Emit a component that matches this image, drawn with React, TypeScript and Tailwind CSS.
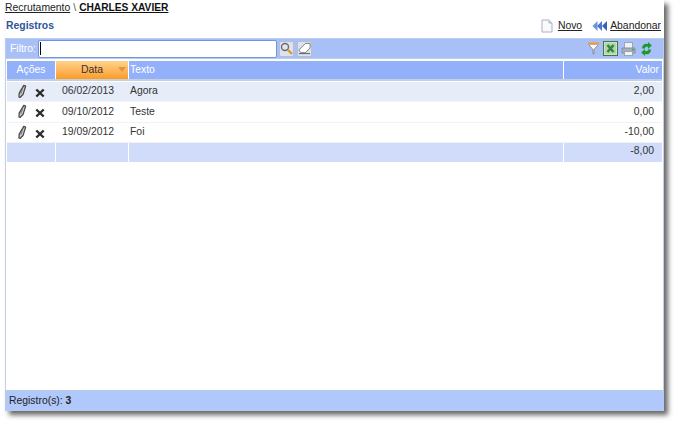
import React from "react";

const rows = [
  { date: "06/02/2013", text: "Agora", value: "2,00", bg: "bg-[#e6ecf8]" },
  { date: "09/10/2012", text: "Teste", value: "0,00", bg: "bg-white" },
  { date: "19/09/2012", text: "Foi", value: "-10,00", bg: "bg-white" },
];

function Pencil() {
  return (
    <svg width="10" height="15" viewBox="0 0 10 15">
      <path d="M6.8 1.4 8.6 2.2 6 10.6 3 13.4 2 13 2.2 9.2Z" fill="#d0d0d0" stroke="#4a4a4a" strokeWidth="1.3" strokeLinejoin="round" />
      <path d="M6 3 3.8 10" stroke="#666" strokeWidth="0.8" />
    </svg>
  );
}

function Cross() {
  return (
    <svg width="10" height="10" viewBox="0 0 10 10">
      <path d="M1.3 1.5 8.7 8.5M8.7 1.5 1.3 8.5" stroke="#2b2b2b" strokeWidth="2.4" />
    </svg>
  );
}

function Actions() {
  return (
    <div className="flex items-center gap-[8px] pl-[10px]">
      <Pencil />
      <span className="mt-[3px] flex">
        <Cross />
      </span>
    </div>
  );
}

function ToolButton({ children }: { children: React.ReactNode }) {
  return (
    <span className="flex h-[16px] w-[15px] items-center justify-center rounded-[2px] border border-[#b4bdd2] bg-[#dfe2ec]">
      {children}
    </span>
  );
}

export default function App() {
  return (
    <div className="h-[422px] w-[677px] overflow-hidden bg-white font-['Liberation_Sans',Arial,sans-serif] text-[10.4px] text-[#333]">
      <div className="ml-[5px] flex h-[411px] w-[659px] flex-col bg-white shadow-[4px_4px_5px_rgba(0,0,0,0.6)]">
        <div className="flex h-[17px] items-center text-[10.4px] leading-none">
          <span className="text-[#222] underline">Recrutamento</span>
          <span className="mx-[3px] text-[#555]">\</span>
          <span className="text-[10.2px] font-bold text-[#111] underline">CHARLES XAVIER</span>
        </div>

        <div className="flex h-[21px] items-center justify-between pb-[3px] pl-[1px] pr-[3px]">
          <span className="text-[10.4px] font-bold text-[#2f5597]">Registros</span>
          <div className="flex items-center text-[#222]">
            <svg width="12" height="14" viewBox="0 0 12 14">
              <path d="M1 1H8L11 4V13H1Z" fill="#fafafa" stroke="#aab2c2" />
              <path d="M8 1V4H11" fill="#dfe3ea" stroke="#aab2c2" />
            </svg>
            <span className="ml-[5px] underline">Novo</span>
            <svg className="ml-[10px]" width="16" height="12" viewBox="0 0 16 12">
              <path d="M5.5 1V11L0.5 6Z" fill="#6f93d6" />
              <path d="M10 1V11L5 6Z" fill="#4f78c8" />
              <path d="M15 1V11L10 6Z" fill="#3763b5" />
            </svg>
            <span className="ml-[2px] underline">Abandonar</span>
          </div>
        </div>

        <div className="flex h-[21px] items-center border border-[#b9cdf0] bg-[#a9c0f7] pl-[4px] pr-[11px]">
          <span className="w-[28px] text-white">Filtro:</span>
          <div className="flex h-[18px] w-[239px] items-center rounded-[2px] border border-[#6f95dc] bg-white pl-[1px]">
            <span className="h-[13px] w-[1px] bg-black" />
          </div>
          <div className="ml-[2px] flex gap-[3px]">
            <ToolButton>
              <svg width="13" height="13" viewBox="0 0 13 13">
                <circle cx="5" cy="5" r="3.5" fill="#dfe6f0" stroke="#6d6d6d" strokeWidth="1.4" />
                <path d="M8 8 12 12" stroke="#d99a2b" strokeWidth="2.4" />
              </svg>
            </ToolButton>
            <ToolButton>
              <svg width="14" height="13" viewBox="0 0 14 13">
                <path d="M1 8 8 1H13V6L8 11H3Z" fill="#fff" stroke="#777" />
                <path d="M1 12H13" stroke="#555" />
              </svg>
            </ToolButton>
          </div>
          <div className="ml-auto flex items-center gap-[3px]">
            <svg width="13" height="13" viewBox="0 0 13 13">
              <path d="M1 1.5H12" stroke="#f09a2c" strokeWidth="2" />
              <path d="M2 3 6 7.5V12L7 12V7.5L11 3" fill="#fff" stroke="#8a8a8a" />
            </svg>
            <svg width="15" height="15" viewBox="0 0 15 15">
              <rect x="0.5" y="0.5" width="14" height="14" fill="#cfe0cb" stroke="#3f7a45" />
              <rect x="2" y="2" width="11" height="11" fill="#b5d3ae" />
              <path d="M4.5 4 10.5 11M10.5 4 4.5 11" stroke="#2c8a3c" strokeWidth="2.6" />
            </svg>
            <svg width="15" height="14" viewBox="0 0 15 14">
              <rect x="3.5" y="0.5" width="8" height="6" fill="#f0f2f5" stroke="#9aa5b5" />
              <path d="M1 6H14V11H1Z" fill="#a5afbd" stroke="#84909f" />
              <rect x="3.5" y="9.5" width="8" height="4" fill="#f2f2f2" stroke="#9aa5b5" />
              <rect x="11" y="7" width="2" height="1.5" fill="#2fb344" />
            </svg>
            <svg className="ml-[2px]" width="11" height="14" viewBox="0 0 11 14">
              <path d="M1 6.5C1 2.5 4 1 7 2L7 0 10.8 3.5 7 7V5C5 4.5 4 5.2 4 6.5Z" fill="#1c9a2c" />
              <path d="M10 7.5C10 11.5 7 13 4 12L4 14 .2 10.5 4 7V9C6 9.5 7 8.8 7 7.5Z" fill="#1c9a2c" />
            </svg>
          </div>
        </div>

        <div className="flex flex-1 flex-col border-x border-[#c5d0e2] px-[1px] pt-[2px]">
          <div className="grid grid-cols-[48px_72px_434px_98px] gap-x-[1px] border-b-[2px] border-[#c4d0e0] text-white">
            <div className="flex h-[18px] items-center justify-center bg-[#93b0fa]">Ações</div>
            <div className="relative flex h-[18px] items-center justify-center bg-gradient-to-b from-[#ffd28a] to-[#fb9c1e] text-[#333]">
              Data
              <span className="absolute right-[2px] top-[6px] border-x-[4px] border-t-[5px] border-x-transparent border-t-[#d89a3a]" />
            </div>
            <div className="flex h-[18px] items-center bg-[#93b0fa] pl-[1px]">Texto</div>
            <div className="flex h-[18px] items-center justify-end bg-[#93b0fa] pr-[3px]">Valor</div>
          </div>

          <div className="mt-[1px] flex-1">
            {rows.map((row) => (
              <div key={row.date} className={`grid h-[20.3px] grid-cols-[48px_72px_434px_98px] gap-x-[1px] border-b border-[#f0f2f6] ${row.bg}`}>
                <Actions />
                <div className="flex items-center pl-[6px] pb-[1px]">{row.date}</div>
                <div className="flex items-center pl-[1px] pb-[1px]">{row.text}</div>
                <div className="flex items-center justify-end pr-[8px] pb-[1px]">{row.value}</div>
              </div>
            ))}
            <div className="grid h-[18px] grid-cols-[48px_72px_434px_98px] gap-x-[1px]">
              <div className="bg-[#d0dcfa]" />
              <div className="bg-[#d0dcfa]" />
              <div className="bg-[#d0dcfa]" />
              <div className="flex items-center justify-end bg-[#d0dcfa] pr-[8px] pb-[3px]">-8,00</div>
            </div>
          </div>
        </div>

        <div className="flex h-[21px] items-center border-y border-[#b9cbe0] bg-[#b0c8fb] pl-[4px] text-[#222]">
          Registro(s):&nbsp;<span className="font-bold">3</span>
        </div>
      </div>
    </div>
  );
}
